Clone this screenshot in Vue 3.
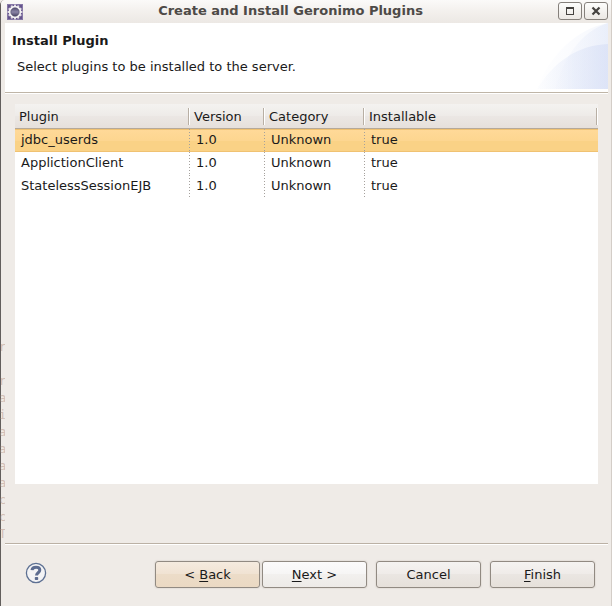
<script setup>
import { ref } from 'vue'

const columns = ['Plugin', 'Version', 'Category', 'Installable']
const plugins = [
  { name: 'jdbc_userds', version: '1.0', category: 'Unknown', installable: 'true' },
  { name: 'ApplictionClient', version: '1.0', category: 'Unknown', installable: 'true' },
  { name: 'StatelessSessionEJB', version: '1.0', category: 'Unknown', installable: 'true' },
]
const selected = ref(0)
const teeth = [0, 30, 60, 90, 120, 150, 180, 210, 240, 270, 300, 330]
// Letters of the window behind that show through the translucent frame.
const behind = ['r', '', 'r', 'a', 'i', 'a', 'a', 'a', 'a', 'c', 'c', 'T']
</script>

<template>
  <div class="window">
    <div class="see-through" aria-hidden="true">
      <span v-for="(letter, index) in behind" :key="index">{{ letter }}</span>
    </div>

    <header class="titlebar">
      <svg class="app-icon" viewBox="0 0 16 16" aria-hidden="true">
        <defs>
          <linearGradient id="core" x1="0" y1="0" x2="0" y2="1">
            <stop offset="0" stop-color="#4b4568" />
            <stop offset="0.5" stop-color="#8a84a6" />
            <stop offset="1" stop-color="#3a3555" />
          </linearGradient>
        </defs>
        <rect width="16" height="16" fill="#65548c" />
        <rect x="0.5" y="0.5" width="15" height="15" fill="none" stroke="#8577a6" />
        <rect
          v-for="angle in teeth"
          :key="angle"
          x="7"
          y="0.6"
          width="2"
          height="3"
          fill="#dedae2"
          :transform="`rotate(${angle} 8 8)`"
        />
        <circle cx="8" cy="8" r="5.2" fill="url(#core)" stroke="#f3f1f3" stroke-width="2" />
        <circle cx="8" cy="8" r="4.2" fill="none" stroke="#4a4464" stroke-width="0.6" />
      </svg>
      <h1 class="title">Create and Install Geronimo Plugins</h1>
      <div class="window-buttons">
        <button class="window-button" type="button" aria-label="Maximize">
          <svg viewBox="0 0 22 16" aria-hidden="true">
            <path d="M7 4h8v8H7z M8 6v5h6V6z" fill="#45423f" fill-rule="evenodd" />
          </svg>
        </button>
        <button class="window-button" type="button" aria-label="Close">
          <svg viewBox="0 0 22 16" aria-hidden="true">
            <path d="M7.5 4.5l7 7M14.5 4.5l-7 7" stroke="#45423f" stroke-width="2.2" />
          </svg>
        </button>
      </div>
    </header>

    <main class="body">
      <section class="banner">
        <div class="banner-text">
          <h2>Install Plugin</h2>
          <p>Select plugins to be installed to the server.</p>
        </div>
        <svg class="banner-art" viewBox="0 0 75 66" aria-hidden="true">
          <defs>
            <linearGradient id="wash" x1="0" y1="0" x2="1" y2="0">
              <stop offset="0" stop-color="#dfe6f8" stop-opacity="0.05" />
              <stop offset="0.6" stop-color="#dfe6f8" stop-opacity="0.5" />
              <stop offset="1" stop-color="#dbe3f7" stop-opacity="0.8" />
            </linearGradient>
            <linearGradient id="wash2" x1="0" y1="0" x2="1" y2="0">
              <stop offset="0" stop-color="#d5dff6" stop-opacity="0.05" />
              <stop offset="1" stop-color="#d5ddf5" stop-opacity="0.75" />
            </linearGradient>
          </defs>
          <path d="M4 66C15 34 43 6 75 0V66z" fill="url(#wash)" opacity="0.35" />
          <path d="M22 66C30 36 48 8 75 0V66z" fill="url(#wash)" opacity="0.55" />
          <path d="M4 66C20 40 44 22 75 21V66z" fill="url(#wash2)" opacity="0.8" />
        </svg>
      </section>

      <section class="content">
        <div class="table-pane">
          <table>
            <colgroup>
              <col class="col-name" />
              <col class="col-version" />
              <col class="col-category" />
              <col />
            </colgroup>
            <thead>
              <tr>
                <th v-for="column in columns" :key="column" scope="col">{{ column }}</th>
              </tr>
            </thead>
            <tbody>
              <tr
                v-for="(plugin, index) in plugins"
                :key="plugin.name"
                :class="{ selected: index === selected }"
                @click="selected = index"
              >
                <td>{{ plugin.name }}</td>
                <td>{{ plugin.version }}</td>
                <td>{{ plugin.category }}</td>
                <td>{{ plugin.installable }}</td>
              </tr>
            </tbody>
          </table>
        </div>
      </section>

      <footer class="actions">
        <button class="help" type="button" aria-label="Help">
          <svg viewBox="0 0 22 22" aria-hidden="true">
            <circle cx="11" cy="11" r="9.6" fill="#f3f3f5" stroke="#5d7092" stroke-width="1.3" />
            <path
              d="M7 8.2C7.2 5.9 8.9 5.2 11 5.2c2.4 0 3.8 1.1 3.8 2.9 0 2.6-3.3 2.7-3.3 5.4"
              fill="none"
              stroke="#5d6c90"
              stroke-width="3"
            />
            <rect x="9.8" y="15" width="3.4" height="3" rx="0.8" fill="#5d6c90" />
          </svg>
        </button>
        <div class="step-buttons">
          <button class="action back" type="button">&lt; <u>B</u>ack</button>
          <button class="action next" type="button"><u>N</u>ext &gt;</button>
        </div>
        <button class="action" type="button">Cancel</button>
        <button class="action" type="button"><u>F</u>inish</button>
      </footer>
    </main>
  </div>
</template>

<style>
body {
  margin: 0;
  background: #efebe7;
}
</style>

<style scoped>
.window {
  position: relative;
  box-sizing: border-box;
  display: flex;
  flex-direction: column;
  min-height: 100vh;
  padding: 0 3px 0 4px;
  border-left: 1px solid #625e5c;
  border-right: 1px solid #d3cdc7;
  border-top-left-radius: 5px;
  background: #efebe7;
  color: #1a1a1a;
  font-family: "DejaVu Sans", sans-serif;
  font-size: 13px;
  line-height: 16px;
}

.see-through {
  position: absolute;
  bottom: 63px;
  left: -2px;
  display: flex;
  flex-direction: column;
  align-items: flex-start;
  width: 6px;
  overflow: hidden;
  color: #b08c7c;
  font-family: "DejaVu Sans Mono", monospace;
  font-size: 12px;
  line-height: 17px;
  opacity: 0.45;
}

.see-through span {
  height: 17px;
}

.titlebar {
  display: flex;
  align-items: center;
  box-sizing: border-box;
  height: 23px;
  margin: 0 -3px 0 -4px;
  padding: 0 3px 1px 6px;
  border-top-left-radius: 4px;
  background: linear-gradient(#fbfaf9, #f3f0ed 50%, #ece8e4);
}

.app-icon {
  width: 16px;
  height: 16px;
  margin-top: 2px;
}

.title {
  flex: 1;
  margin: 0;
  color: #4d4a47;
  font-size: 13px;
  text-align: center;
}

.window-buttons {
  display: flex;
  gap: 2px;
}

.window-button {
  width: 24px;
  height: 18px;
  padding: 0;
  border: 1px solid #85807b;
  border-radius: 3px;
  background: linear-gradient(#fdfdfc, #ece8e4);
}

.window-button svg {
  display: block;
  width: 22px;
  height: 16px;
}

.body {
  display: flex;
  flex: 1;
  flex-direction: column;
}

.banner {
  display: flex;
  justify-content: space-between;
  height: 69px;
  border-bottom: 1px solid #bfb5a7;
  background: #fff;
}

.banner-text {
  padding: 10px 0 0 7px;
}

.banner h2 {
  margin: 0;
  font-size: 13px;
}

.banner p {
  margin: 0;
  padding: 10px 0 0 5px;
}

.banner-art {
  width: 75px;
  height: 66px;
}

.content {
  display: flex;
  flex: 1;
  padding: 10px 10px 59px;
  border-top: 1px solid #fff;
  border-bottom: 1px solid #bbb1a5;
}

.table-pane {
  flex: 1;
  background: #fff;
}

table {
  width: 100%;
  table-layout: fixed;
  border-collapse: separate;
  border-spacing: 0;
}

.col-name {
  width: 175px;
}

.col-version {
  width: 75px;
}

.col-category {
  width: 100px;
}

th {
  height: 22px;
  padding: 2px 0 0 4px;
  border-bottom: 1px solid #b5a999;
  background:
    linear-gradient(#b8afa4, #b8afa4) right 1px center / 1px 17px no-repeat,
    linear-gradient(#fff, #fff) right center / 1px 17px no-repeat,
    linear-gradient(#f4f2f0, #eeebe8 50%, #ebe7e4 50%, #e6e0db);
  font-weight: normal;
  text-align: left;
}

td {
  height: 22px;
  padding: 0 0 1px 6px;
  background: repeating-linear-gradient(#a5a19d 0 1px, transparent 1px 3px) right top / 1px 100% no-repeat;
}

td:last-child {
  background: none;
}

.selected {
  background: linear-gradient(#f0c272 1px, #ffd998 1px, #fdd690 50%, #fad286 50%, #fad286 22px, #f0c272 22px);
}

.actions {
  display: flex;
  align-items: center;
  gap: 9px;
  padding: 16px 13px 18px 20px;
  border-top: 1px solid #fff;
}

.help {
  width: 22px;
  height: 22px;
  margin: 0 auto 3px 0;
  padding: 0;
  border: 0;
  background: none;
}

.help svg {
  display: block;
  width: 22px;
  height: 22px;
}

.step-buttons {
  display: flex;
  gap: 2px;
}

.action {
  width: 105px;
  height: 27px;
  padding: 0;
  border: 1px solid #918a82;
  border-radius: 3px;
  background: linear-gradient(#f5f3f1, #efebe8 50%, #eae6e2 50%, #e6e0da);
  box-shadow: 0 0 1px 1px #e5e0db;
  color: #1a1a1a;
  font: inherit;
}

.action u {
  text-underline-offset: 2px;
}

.next {
  background: linear-gradient(#fcfbfb, #f6f5f4 50%, #f2f0ee 50%, #edeae7);
}

.back {
  background: linear-gradient(#f5ebdf, #f0e2d2 50%, #ecdcc8 50%, #ebd9c3);
}
</style>
